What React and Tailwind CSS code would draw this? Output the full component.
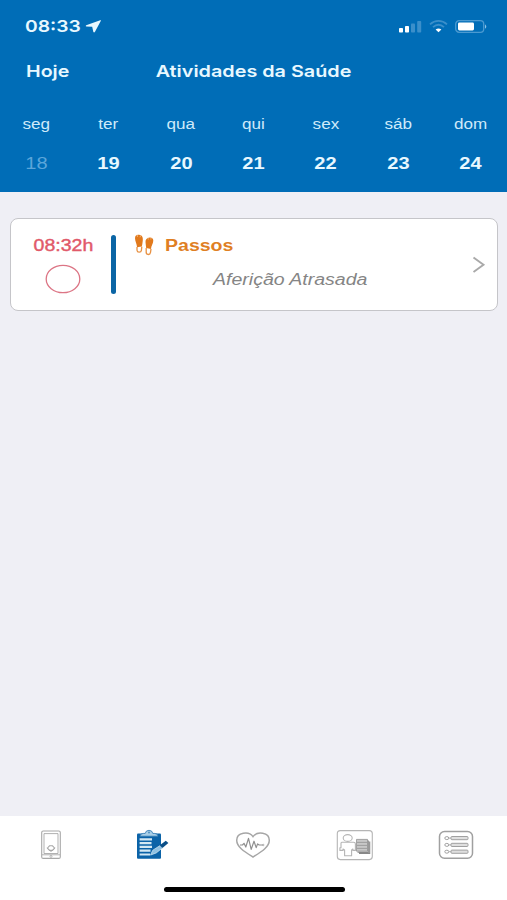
const DAYS = [
  { name: "seg", date: 18, past: true },
  { name: "ter", date: 19 },
  { name: "qua", date: 20 },
  { name: "qui", date: 21 },
  { name: "sex", date: 22 },
  { name: "sáb", date: 23 },
  { name: "dom", date: 24 },
];

// =========================
// STATUS BAR
// =========================
const StatusBar = () => (
  <div className="flex h-[50px] items-center pl-[25px] pr-[19px] pt-[2px]">
    <span className="w-[60px] text-[16.5px] font-semibold leading-none">
      <span className="inline-block origin-left scale-x-[1.17]">08:33</span>
    </span>
    <svg width="17" height="13" viewBox="0 0 17 13" fill="currentColor">
      <path d="M16 0.6Q16.6 0 15.2 0.2L1.2 5.2Q0 6.2 1.4 6.5L7.2 6.8 8.3 11.8Q9 13 10 11.8Z" />
    </svg>

    <div className="ml-auto flex items-center gap-[7px]">
      <svg width="23" height="13" viewBox="0 0 23 13">
        <rect x="0" y="8" width="4" height="4.5" rx="0.8" fill="#fff" />
        <rect x="6" y="6" width="4" height="6.5" rx="0.8" fill="#fff" />
        <rect x="12" y="3.4" width="4" height="9.1" rx="0.8" fill="#3b8fca" />
        <rect x="18.2" y="1" width="4" height="11.5" rx="0.8" fill="#3b8fca" />
      </svg>
      <svg width="19" height="13" viewBox="0 0 19 13" fill="none">
        <path d="M1 4.3C6-0.2 13-0.2 18 4.3" stroke="#3b8fca" strokeWidth="1.8" />
        <path d="M4 7.2C7.4 4.2 11.6 4.2 15 7.2" stroke="#3b8fca" strokeWidth="1.8" />
        <path d="M6.6 9.4Q9.5 7.6 12.4 9.4L9.5 12.2Z" fill="#fff" />
      </svg>
      <svg width="33" height="13" viewBox="0 0 33 13" fill="none">
        <rect x="0.7" y="0.7" width="28" height="11.6" rx="3.4" stroke="#4b9ad1" strokeWidth="1.3" />
        <rect x="3" y="2.6" width="16" height="7.8" rx="1.4" fill="#fff" />
        <path d="M30 4.2Q32.6 6.5 30 8.8Z" fill="#8cc0e4" />
      </svg>
    </div>
  </div>
);

// =========================
// WEEK CALENDAR
// =========================
const Week = () => (
  <div className="grid grid-cols-7 font-['Liberation_Sans',sans-serif]">
    {DAYS.map((day) => (
      <div key={day.date} className="flex flex-col items-center">
        <span className="mt-[22px] scale-x-[1.22] text-[14px] leading-[20px] text-[#cfeafa]">
          {day.name}
        </span>
        <span
          className={`mt-[20px] scale-x-[1.18] text-[17px] leading-[20px] ${
            day.past ? "text-[#5ba6da]" : "font-bold"
          }`}
        >
          {day.date}
        </span>
      </div>
    ))}
  </div>
);

const Footprints = () => (
  <svg width="20" height="22" viewBox="0 0 20 22" fill="none">
    <path d="M1 4.2C1 1.2 3 0.6 5 0.8 8 1 9.2 3.4 8.8 6.2 8.5 8.6 8.4 10.5 7.8 12.6L3 13.2C3 10 1 7.5 1 4.2Z" fill="#e1791c" />
    <path d="M3 13V16.2C3.2 18.8 7 18.9 7.4 16.3L7.8 12.6" stroke="#e89142" strokeWidth="1.3" />
    <path d="M19.3 6.6C19.3 4.2 17.6 3.3 15.7 3.4 12.8 3.5 11.4 5.4 11.5 8.1 11.6 10.3 12 12.2 12.2 14L17 14.9C17.1 12 19.3 10 19.3 6.6Z" fill="#e1791c" />
    <path d="M12.2 14V17.6C11.8 21 16 21.5 16.5 18.4L17 14.8" stroke="#e89142" strokeWidth="1.3" />
    <path d="M3.2 0.7 3.5 3M6.6 1.4 6.1 3.3M14 3.8 14.3 5.6M17.2 3.8 16.8 5.5" stroke="#f6c795" strokeWidth="0.7" />
  </svg>
);

// =========================
// ACTIVITY CARD
// =========================
const ActivityCard = () => (
  <div className="ml-[10px] mr-[9px] mt-[26px] flex h-[93px] rounded-[8px] border-[1.5px] border-[#c5c5c9] bg-white font-['Liberation_Sans',sans-serif] text-[16px]">
    <div className="flex w-[104px] flex-col items-center pt-[17px]">
      <span className="scale-x-[1.22] leading-[20px] text-[#e1596a] [-webkit-text-stroke:0.4px_#e1596a]">
        08:32h
      </span>
      <svg className="mt-[8px]" width="36" height="30" viewBox="0 0 36 30" fill="none">
        <ellipse cx="18" cy="15" rx="16.8" ry="13.7" stroke="#dc7585" strokeWidth="1.3" />
      </svg>
    </div>

    <div className="-ml-[4px] mt-[16px] h-[59px] w-[5px] rounded-full bg-[#0b65a5]" />

    <div className="flex flex-1 flex-col pl-[18px] pt-[14px]">
      <div className="flex items-center">
        <Footprints />
        <span className="ml-[11px] mt-[3px] origin-left scale-x-[1.22] font-bold leading-[20px] text-[#df7f24]">
          Passos
        </span>
      </div>
      <span className="ml-[79px] mt-[14px] w-fit origin-left scale-x-[1.22] italic leading-[20px] text-[#858585]">
        Aferição Atrasada
      </span>
    </div>

    <svg className="mr-[11px] mt-[37px]" width="14" height="18" viewBox="0 0 14 18" fill="none">
      <path d="M1.5 1.5 11.5 8.8 1.5 16" stroke="#a9a9a9" strokeWidth="1.9" />
    </svg>
  </div>
);

// =========================
// TAB ICONS
// =========================
const PhoneIcon = () => (
  <svg width="34" height="32" viewBox="0 0 34 32" fill="none" stroke="#a8a8a8">
    <rect x="7.7" y="2" width="18.6" height="27.4" rx="1.5" strokeWidth="1.1" />
    <path d="M10 4.6H24V24.5H10ZM8 25.8H26" strokeWidth="0.9" />
    <path d="M13.5 19 15.5 16.8H18.5L20.5 19 18.5 21.4H15.5Z" strokeWidth="1.1" />
    <path d="M12.8 19 17 22.6 21.2 19" strokeWidth="0.8" />
    <circle cx="17" cy="27.4" r="1" strokeWidth="0.8" />
  </svg>
);

const ClipboardIcon = () => (
  <svg width="34" height="32" viewBox="0 0 34 32" fill="none">
    <rect x="2" y="4.4" width="24" height="25.4" rx="1" fill="#0b63a8" />
    <path d="M5 7.2Q5.2 4.4 8.6 4.4H10.2Q10.8 1.3 14 1.3T17.8 4.4H19.4Q22.8 4.4 23 7.2Z" fill="#a9cfe8" stroke="#2f79b3" strokeWidth="0.8" />
    <circle cx="14" cy="3.6" r="1" fill="#4d8fc0" />
    <path d="M4.6 10.3H17M4.6 14.1H16.5M4.6 17.9H17M4.6 21.7H15.5M4.6 25.5H15" stroke="#d3e8f3" strokeWidth="2.2" />
    <path d="M30.8 11.8 33.4 14.1 21.5 24 17.8 21.6Z" fill="#0b4f87" />
    <path d="M25 16.6 17.8 21.2 15.5 26.1 21.3 23.9 27.4 19" fill="#8fc1e2" stroke="#d3e8f3" strokeWidth="0.7" />
  </svg>
);

const HeartIcon = () => (
  <svg width="36" height="32" viewBox="0 0 36 32" fill="none" stroke="#a6a6a6">
    <path d="M18 28C10.4 23.3 1.7 18.4 1.7 11.3 1.7 3.4 13.8 1.8 18 7.6 22.2 1.8 34.3 3.4 34.3 11.3 34.3 18.4 25.6 23.3 18 28Z" strokeWidth="1.5" />
    <path d="M5 16H7.5L9 14.3 10.8 18 13.5 9.4 16.2 20.4 19 12.2 21.2 18.6 22.6 14.9 24.2 16H28" stroke="#8f8f8f" strokeWidth="1.2" strokeLinejoin="round" />
    <circle cx="28.3" cy="16" r="0.7" strokeWidth="0.9" />
  </svg>
);

const PersonIcon = () => (
  <svg width="38" height="32" viewBox="0 0 38 32" fill="none" stroke="#b5b5b5">
    <rect x="1.3" y="1.6" width="35" height="29" rx="3" strokeWidth="1.1" />
    <ellipse cx="11.7" cy="9" rx="4.5" ry="3.4" strokeWidth="1.1" />
    <path d="M5.8 13.2H17.6Q19.4 13.2 19.4 15V21.4H16.9V20L15.6 21V26.8H8.6V21L7 20V21.4H3.9V18.8H5V14.2Q5 13.2 5.8 13.2Z" strokeWidth="1.1" strokeLinejoin="round" />
    <path d="M20.5 10.4H31.5V22.2H20.5Z" fill="#c8c8c8" stroke="#929292" strokeWidth="0.8" />
    <path d="M21 13.4H31M21 16.4H31M21 19.4H31" stroke="#999" strokeWidth="0.9" />
    <path d="M32.3 11.4V23.2H21.5M33.7 12.4V24.4H23" stroke="#888" strokeWidth="1.1" />
  </svg>
);

const ListIcon = () => (
  <svg width="38" height="32" viewBox="0 0 38 32" fill="none" stroke="#a0a0a0">
    <rect x="2.5" y="2.6" width="33" height="26.6" rx="5" strokeWidth="1.5" />
    {[9.1, 15.9, 22.7].map((y) => (
      <g key={y}>
        <ellipse cx="9.8" cy={y} rx="2" ry="1.5" strokeWidth="1" />
        <path d={`M12 ${y}H14`} strokeWidth="0.8" />
        <rect x="14" y={y - 1.6} width="17" height="3.2" rx="0.9" fill="#dfdfdf" strokeWidth="1" />
      </g>
    ))}
  </svg>
);

const TABS = [PhoneIcon, ClipboardIcon, HeartIcon, PersonIcon, ListIcon];

const App = () => {
  return (
    <div className="flex h-[900px] w-[507px] flex-col overflow-hidden bg-[#efeff5] font-['Inter',sans-serif]">
      {/* HEADER */}
      <header className="h-[192px] bg-[#006db7] text-[#e8f8ff]">
        <StatusBar />
        <div className="grid h-[42px] grid-cols-[1fr_auto_1fr] items-center pl-[26px] pr-[25px] pt-[1px] text-[16.5px] font-semibold">
          <span className="w-fit origin-left scale-x-[1.19]">Hoje</span>
          <span className="scale-x-[1.2]">Atividades da Saúde</span>
        </div>
        <Week />
      </header>

      <main className="flex-1">
        <ActivityCard />
      </main>

      {/* TAB BAR */}
      <nav className="flex h-[84px] flex-col items-center bg-white">
        <div className="grid w-full grid-cols-5 pt-[13px]">
          {TABS.map((Icon, i) => (
            <button key={i} className="flex justify-center">
              <Icon />
            </button>
          ))}
        </div>
        <div className="ml-[1px] mt-[26px] h-[5px] w-[181px] rounded-full bg-black" />
      </nav>
    </div>
  );
};

export default App;
